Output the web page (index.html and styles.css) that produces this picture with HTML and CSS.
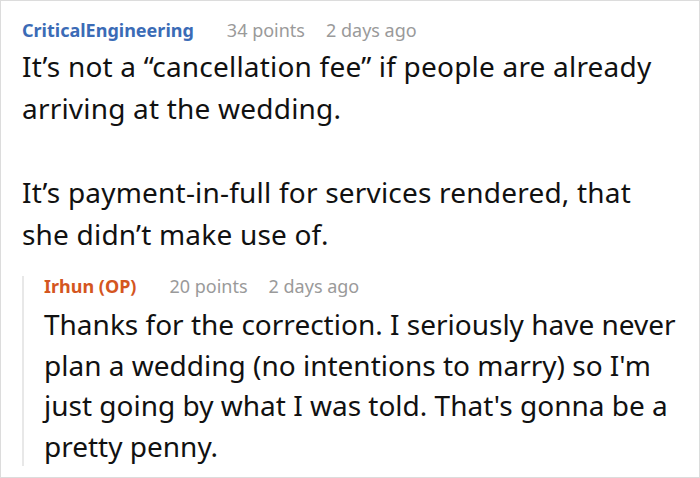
FILE: index.html
```html
<!DOCTYPE html>
<html>
<head>
<meta charset="utf-8">
<link rel="stylesheet" href="styles.css">
</head>
<body>
<div class="frame">
  <div class="comment">
    <div class="meta">
      <span class="author">CriticalEngineering</span>
      <span class="info">34 points</span>
      <span class="info">2 days ago</span>
    </div>
    <div class="body">
      <p>It’s not a “cancellation fee” if people are already arriving at the wedding.</p>
      <p>It’s payment-in-full for services rendered, that she didn’t make use of.</p>
    </div>
    <div class="reply">
      <div class="meta reply-meta">
        <span class="author op">Irhun (OP)</span>
        <span class="info">20 points</span>
        <span class="info">2 days ago</span>
      </div>
      <div class="body reply-body">
        <p>Thanks for the correction. I seriously have never plan a wedding (no intentions to marry) so I'm just going by what I was told. That's gonna be a pretty penny.</p>
      </div>
    </div>
  </div>
</div>
</body>
</html>
```
FILE: styles.css
```css
html, body {
  margin: 0;
  padding: 0;
  background: #fff;
}
.frame {
  width: 700px;
  height: 478px;
  box-sizing: border-box;
  border: 1px solid #dcdcdc;
  font-family: "Noto Sans", "Open Sans", sans-serif;
  overflow: hidden;
}
.comment {
  padding: 16.5px 18px 0 21px;
}
.meta {
  display: flex;
  font-size: 18px;
  line-height: 24px;
  align-items: baseline;
  margin-bottom: 3.5px;
}
.author {
  font-weight: bold;
  color: #3b6bb6;
  margin-right: 33px;
}
.author.op {
  color: #d4561f;
}
.info {
  color: #9a9a9a;
  margin-right: 21px;
}
.body {
  font-size: 28px;
  line-height: 42px;
  letter-spacing: 0.2px;
  color: #111;
}
.body p {
  margin: 0 0 42px 0;
}
.body p:last-child {
  margin-bottom: 0;
}
.reply {
  margin-top: 28px;
  border-left: 2px solid #e8e8e8;
  padding-left: 20px;
}
.reply-meta {
  line-height: 20px;
  margin-top: -7px;
  margin-bottom: 8px;
}
.reply-body {
  line-height: 40.5px;
  letter-spacing: 0;
  padding-bottom: 0;
}
.reply-body p {
  margin: 0 0 -4px 0;
}
```
